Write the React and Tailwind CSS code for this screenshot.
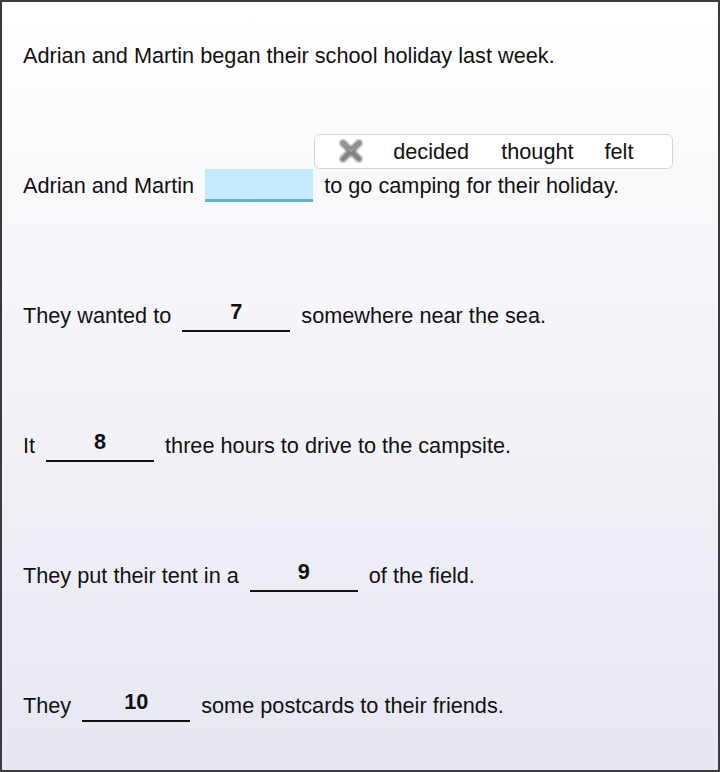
import React from 'react'

const font = { fontFamily: '"Liberation Sans", Arial, sans-serif' }

function Blank({ value }) {
  return (
    <div className="flex h-[34px] w-[108px] shrink-0 justify-center border-b-2 border-[#111] pt-[1px]">
      <span className="text-[21.7px] font-bold leading-[25px] text-[#111]">{value}</span>
    </div>
  )
}

function CloseIcon() {
  return (
    <svg width="26" height="26" viewBox="0 0 26 26" className="shrink-0">
      <defs>
        <filter id="soft" x="-20%" y="-20%" width="140%" height="140%">
          <feGaussianBlur stdDeviation="0.9" />
        </filter>
      </defs>
      <g filter="url(#soft)" strokeLinecap="round" strokeWidth="6.5" stroke="#808080">
        <line x1="5" y1="5" x2="21" y2="21" />
        <line x1="21" y1="5" x2="5" y2="21" />
      </g>
      <g strokeLinecap="round" strokeWidth="2" stroke="#aaaaaa" opacity="0.6">
        <line x1="5" y1="5" x2="13" y2="13" />
        <line x1="21" y1="5" x2="13" y2="13" />
      </g>
    </svg>
  )
}

function Row({ children }) {
  return <div className="flex h-[34px] items-center gap-[11px] whitespace-nowrap">{children}</div>
}

export default function App() {
  return (
    <div
      className="h-[772px] w-[720px] border-2 border-[#3b3b3b] bg-linear-to-b from-white to-[#e7e7f2] text-[21.7px] leading-[25px] text-[#111]"
      style={font}
    >
      <div className="flex flex-col gap-[96px] pl-[21px] pt-[36px]">
        <Row>
          <span>Adrian and Martin began their school holiday last week.</span>
        </Row>

        <Row>
          <span>Adrian and Martin</span>
          <div className="relative h-[33px] w-[108px] shrink-0 border-b-[3px] border-[#6bb0c0] bg-[#c3ebfc]">
            {/* word choices popup */}
            <div className="absolute bottom-full left-[109px] flex h-[35px] w-[359px] items-center rounded-[6px] border border-[#d6d6d6] bg-white pl-[23px]">
              <CloseIcon />
              <span className="ml-[29px]">decided</span>
              <span className="ml-[32px]">thought</span>
              <span className="ml-[31px]">felt</span>
            </div>
          </div>
          <span>to go camping for their holiday.</span>
        </Row>

        <Row>
          <span>They wanted to</span>
          <Blank value="7" />
          <span>somewhere near the sea.</span>
        </Row>

        <Row>
          <span>It</span>
          <Blank value="8" />
          <span>three hours to drive to the campsite.</span>
        </Row>

        <Row>
          <span>They put their tent in a</span>
          <Blank value="9" />
          <span>of the field.</span>
        </Row>

        <Row>
          <span>They</span>
          <Blank value="10" />
          <span>some postcards to their friends.</span>
        </Row>
      </div>
    </div>
  )
}
